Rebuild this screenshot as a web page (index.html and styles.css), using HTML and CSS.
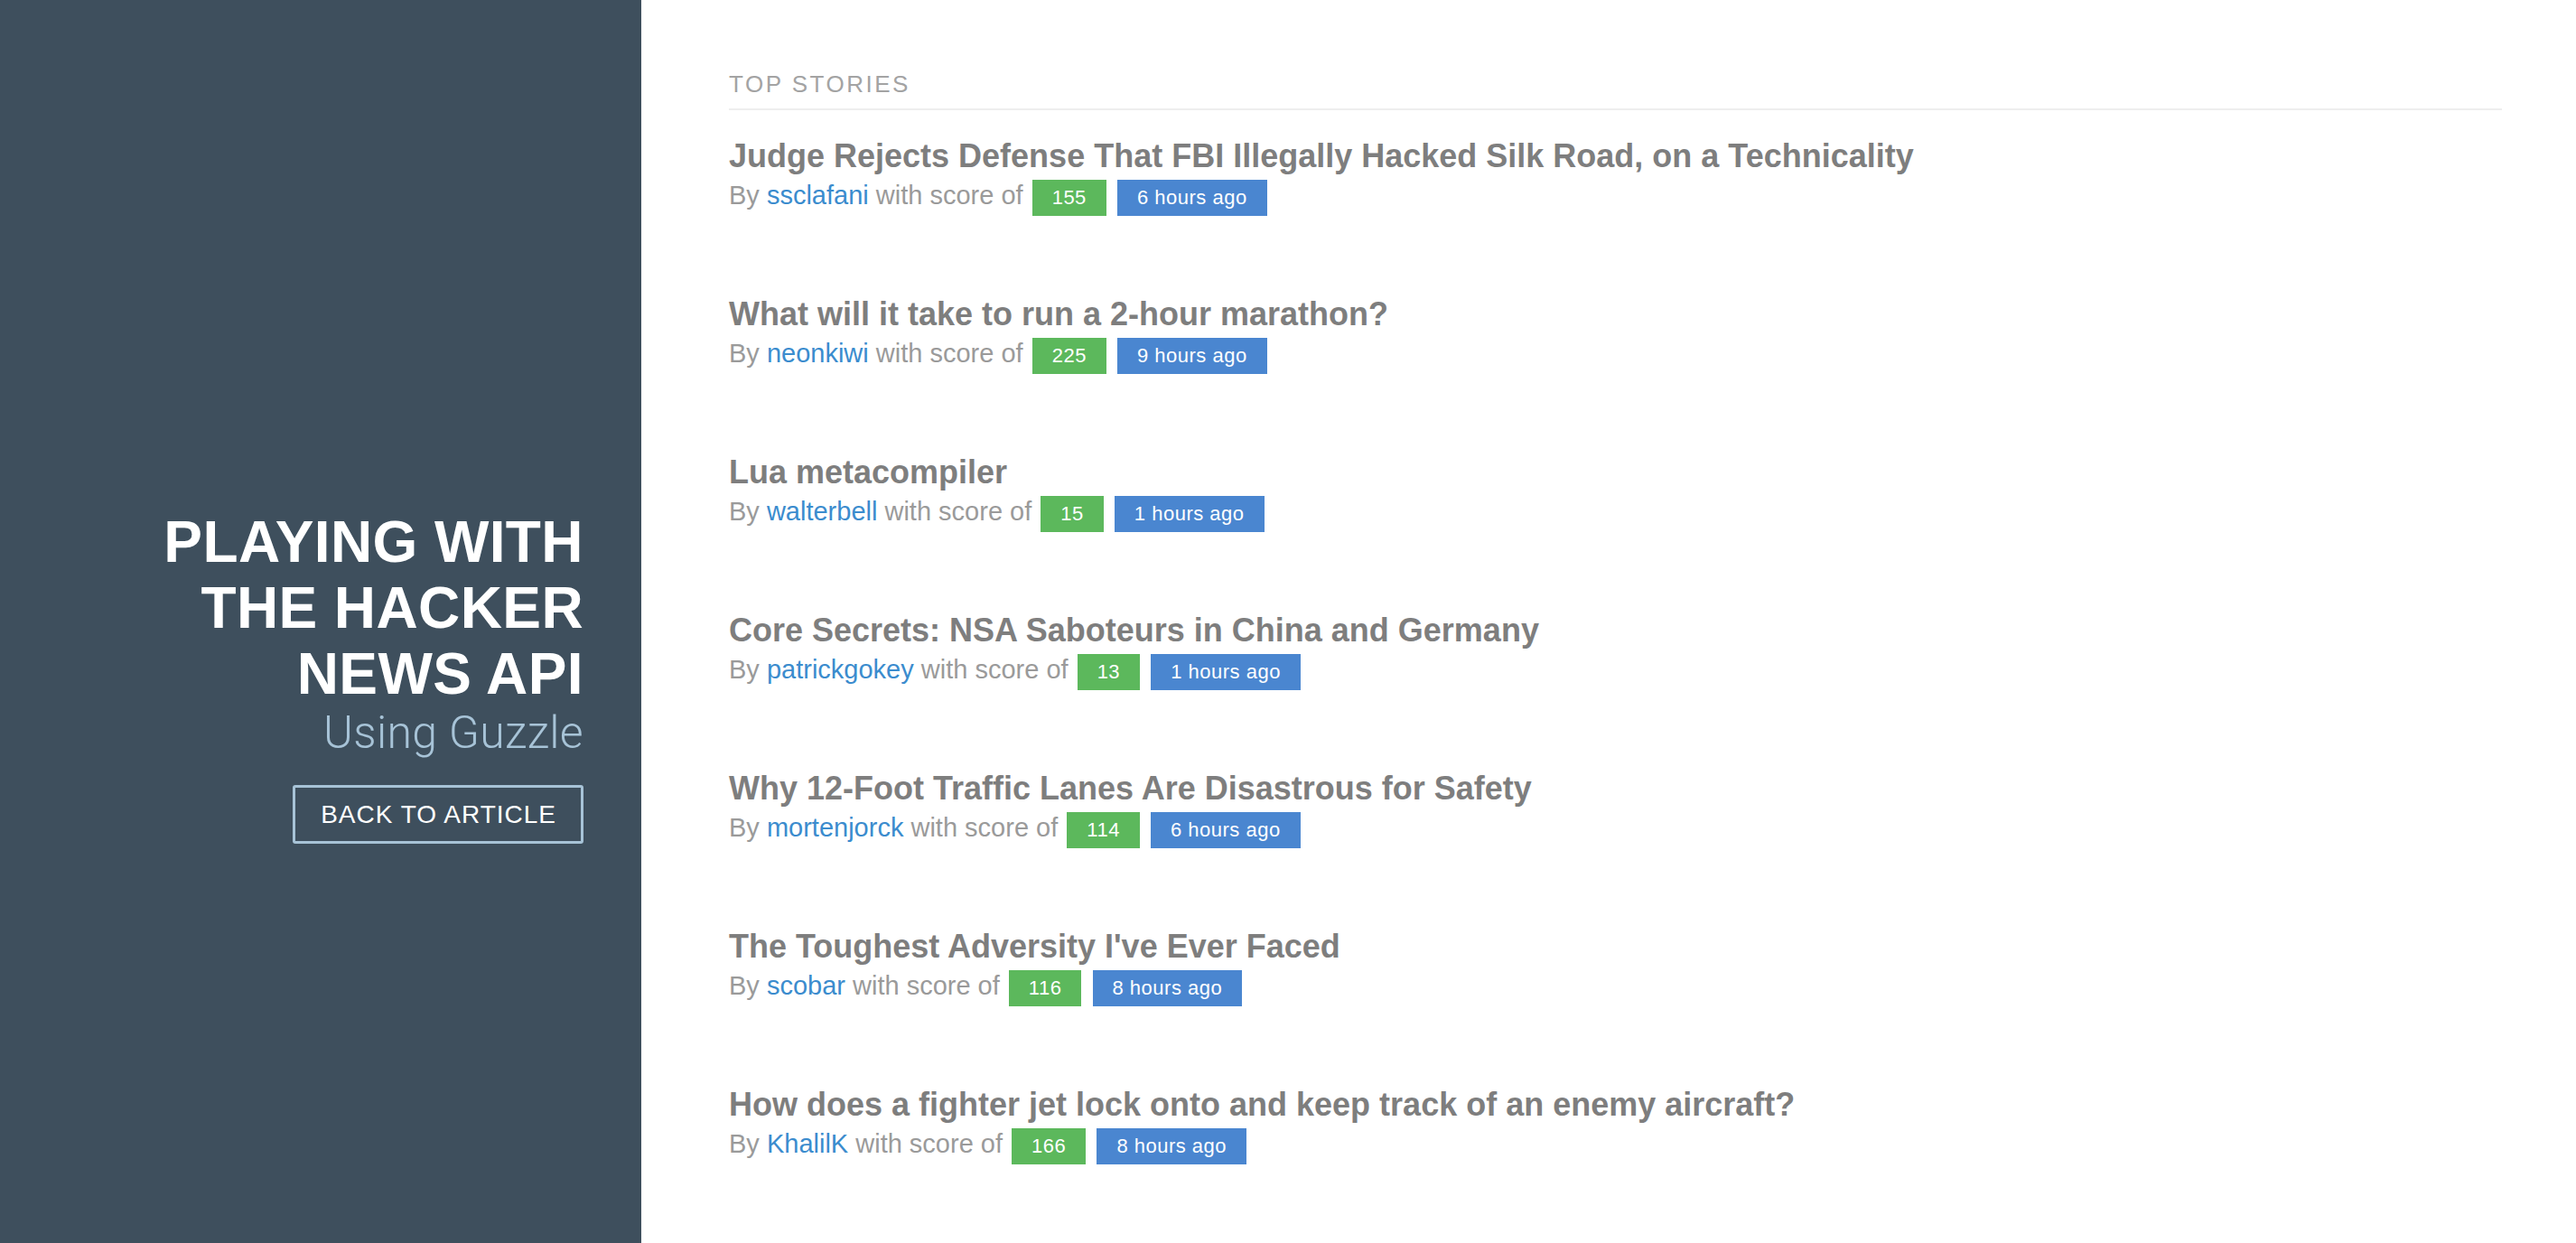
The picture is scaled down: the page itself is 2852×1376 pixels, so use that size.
FILE: index.html
```html
<!DOCTYPE html>
<html lang="en">
<head>
<meta charset="utf-8">
<title>Playing with the Hacker News API</title>
<link rel="stylesheet" href="styles.css">
</head>
<body>
<aside class="sidebar">
  <h1 class="site-title">PLAYING WITH THE HACKER NEWS API</h1>
  <p class="site-subtitle">Using Guzzle</p>
  <a class="back-btn" href="#">BACK TO ARTICLE</a>
</aside>
<main class="content">
  <h2 class="section-title">TOP STORIES</h2>
  <ul class="stories">
    <li class="story">
      <a class="story-title" href="#">Judge Rejects Defense That FBI Illegally Hacked Silk Road, on a Technicality</a>
      <div class="story-meta">By <a class="author" href="#">ssclafani</a> with score of <span class="badge badge-score">155</span> <span class="badge badge-time">6 hours ago</span></div>
    </li>
    <li class="story">
      <a class="story-title" href="#">What will it take to run a 2-hour marathon?</a>
      <div class="story-meta">By <a class="author" href="#">neonkiwi</a> with score of <span class="badge badge-score">225</span> <span class="badge badge-time">9 hours ago</span></div>
    </li>
    <li class="story">
      <a class="story-title" href="#">Lua metacompiler</a>
      <div class="story-meta">By <a class="author" href="#">walterbell</a> with score of <span class="badge badge-score">15</span> <span class="badge badge-time">1 hours ago</span></div>
    </li>
    <li class="story">
      <a class="story-title" href="#">Core Secrets: NSA Saboteurs in China and Germany</a>
      <div class="story-meta">By <a class="author" href="#">patrickgokey</a> with score of <span class="badge badge-score">13</span> <span class="badge badge-time">1 hours ago</span></div>
    </li>
    <li class="story">
      <a class="story-title" href="#">Why 12-Foot Traffic Lanes Are Disastrous for Safety</a>
      <div class="story-meta">By <a class="author" href="#">mortenjorck</a> with score of <span class="badge badge-score">114</span> <span class="badge badge-time">6 hours ago</span></div>
    </li>
    <li class="story">
      <a class="story-title" href="#">The Toughest Adversity I've Ever Faced</a>
      <div class="story-meta">By <a class="author" href="#">scobar</a> with score of <span class="badge badge-score">116</span> <span class="badge badge-time">8 hours ago</span></div>
    </li>
    <li class="story">
      <a class="story-title" href="#">How does a fighter jet lock onto and keep track of an enemy aircraft?</a>
      <div class="story-meta">By <a class="author" href="#">KhalilK</a> with score of <span class="badge badge-score">166</span> <span class="badge badge-time">8 hours ago</span></div>
    </li>
  </ul>
</main>
</body>
</html>
```

FILE: styles.css
```css
* { box-sizing: border-box; }

html, body {
  margin: 0;
  padding: 0;
  height: 100%;
}

body {
  display: flex;
  font-family: "Liberation Sans", Arial, Helvetica, sans-serif;
  background: #ffffff;
  min-height: 1376px;
  overflow: hidden;
}

.sidebar {
  width: 710px;
  flex: 0 0 710px;
  background: #3e4f5d;
  display: flex;
  flex-direction: column;
  align-items: flex-end;
  padding: 564px 64px 0 0;
  text-align: right;
}

.site-title {
  margin: 0;
  font-size: 64px;
  line-height: 73px;
  font-weight: 700;
  letter-spacing: 0.4px;
  color: #ffffff;
  width: 490px;
}

.site-subtitle {
  margin: 0;
  font-family: Roboto, "Liberation Sans", sans-serif;
  font-weight: 300;
  font-size: 50px;
  line-height: 56px;
  letter-spacing: 0.3px;
  color: #a7c3d7;
}

.back-btn {
  margin-top: 30px;
  display: inline-block;
  border: 3px solid #a7c3d7;
  border-radius: 3px;
  padding: 0 27px 0 28px;
  line-height: 59px;
  font-size: 28px;
  letter-spacing: 1px;
  color: #ffffff;
  text-decoration: none;
}

.content {
  flex: 1;
  padding: 78px 82px 0 97px;
}

.section-title {
  margin: 0;
  font-size: 26px;
  line-height: 30px;
  font-weight: 400;
  letter-spacing: 2.5px;
  color: #a3a3a3;
  padding-bottom: 12px;
  border-bottom: 2px solid #eeeeee;
}

.stories {
  list-style: none;
  margin: 29px 0 0 0;
  padding: 0;
  display: flex;
  flex-direction: column;
  gap: 89px;
}

.story {
  display: flex;
  flex-direction: column;
}

.story-title {
  font-size: 36px;
  line-height: 44px;
  font-weight: 700;
  color: #7e7e7e;
  text-decoration: none;
}

.story-meta {
  font-size: 29px;
  line-height: 42px;
  height: 42px;
  color: #9a9a9a;
}

.author {
  color: #3b8cce;
  text-decoration: none;
}

.badge {
  display: inline-block;
  font-size: 22px;
  line-height: 26px;
  padding: 7px 22px;
  letter-spacing: 0.5px;
  color: #ffffff;
  vertical-align: baseline;
}

.badge-score {
  background: #5cb85c;
  margin-left: 2px;
}

.badge-time {
  background: #4a86d0;
  margin-left: 4px;
}
```
